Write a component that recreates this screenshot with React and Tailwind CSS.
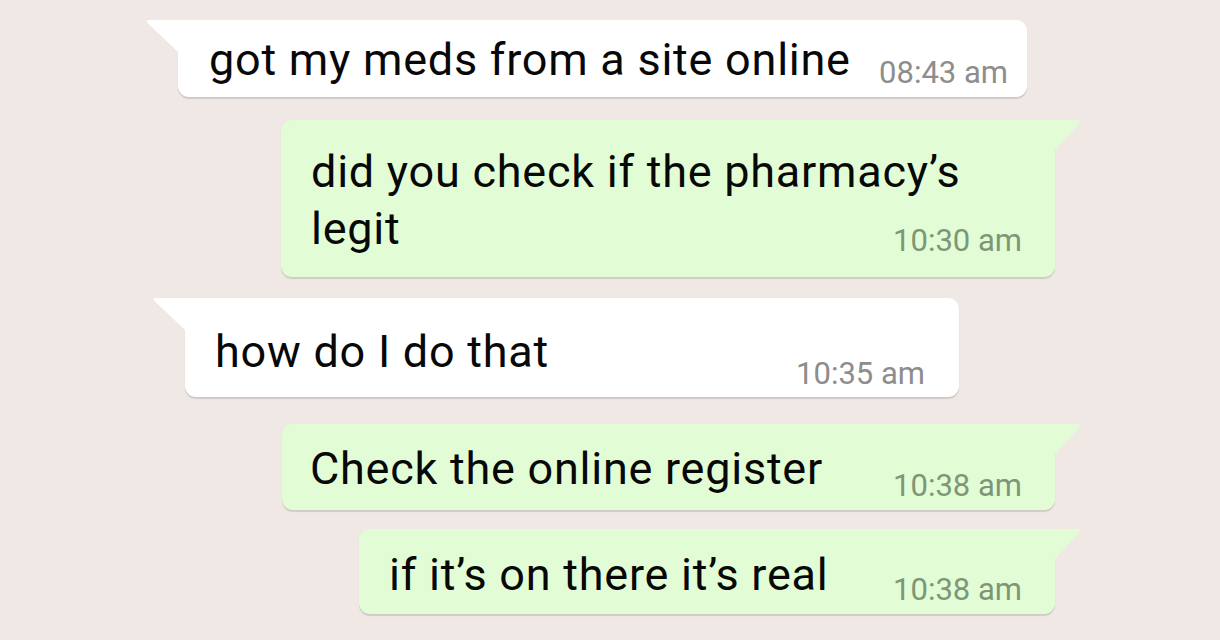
const messages = [
  {
    id: 1,
    out: false,
    text: "got my meds from a site online",
    time: "08:43 am",
    box: "mt-[20px] ml-[178px] w-[849px] pt-[11px] pb-[8.5px] pl-[31px] pr-[19px]",
    timeClass: "mt-[27px]",
  },
  {
    id: 2,
    out: true,
    lead: "did you check if the pharmacy’s",
    text: "legit",
    time: "10:30 am",
    box: "mt-[23px] ml-[281px] w-[774px] pt-[23px] pb-[20px] pl-[30px] pr-[33px]",
    timeClass: "mt-[26px]",
  },
  {
    id: 3,
    out: false,
    text: "how do I do that",
    time: "10:35 am",
    box: "mt-[21px] ml-[185px] w-[774px] pt-[25px] pb-[8.5px] pl-[30px] pr-[34px]",
    timeClass: "mt-[36px]",
  },
  {
    id: 4,
    out: true,
    text: "Check the online register",
    time: "10:38 am",
    box: "mt-[27px] ml-[282px] w-[773px] pt-[16px] pb-[8.5px] pl-[28px] pr-[33px]",
    timeClass: "mt-[31px]",
  },
  {
    id: 5,
    out: true,
    text: "if it’s on there it’s real",
    time: "10:38 am",
    box: "mt-[19px] ml-[359px] w-[696px] pt-[17px] pb-[9.5px] pl-[30px] pr-[33px]",
    timeClass: "mt-[29px]",
  },
];

const lineText = "text-[45px] leading-[57px] tracking-[0.75px] text-[#080808]";

const Tail = ({ out }) =>
  out ? (
    <svg
      className="absolute top-0 right-[-27px]"
      width="28"
      height="32"
      viewBox="0 0 28 32"
    >
      <path d="M0 0 H24 Q28 0 25.5 3 L0 31 Z" fill="#e2fdd6" />
    </svg>
  ) : (
    <svg
      className="absolute top-0 left-[-33px]"
      width="34"
      height="34"
      viewBox="0 0 34 34"
    >
      <path d="M34 0 H4 Q0 0 2.5 3 L34 33 Z" fill="#ffffff" />
    </svg>
  );

const Bubble = ({ msg }) => (
  <div
    className={`relative rounded-[11px] shadow-[0_1.5px_1px_rgba(0,0,0,0.13)] ${
      msg.out ? "bg-[#e2fdd6] rounded-tr-none" : "bg-white rounded-tl-none"
    } ${msg.box}`}
  >
    <Tail out={msg.out} />
    {msg.lead && <p className={lineText}>{msg.lead}</p>}
    <div className="flex items-start justify-between">
      <p className={lineText}>{msg.text}</p>
      <span
        className={`text-[31px] leading-[30px] whitespace-nowrap ${
          msg.out ? "text-[#7e9676]" : "text-[#8d8d8d]"
        } ${msg.timeClass}`}
      >
        {msg.time}
      </span>
    </div>
  </div>
);

export default function App() {
  return (
    <div
      className="w-[1220px] h-[640px] overflow-hidden bg-[#f0e8e5] flex flex-col"
      style={{ fontFamily: "Roboto, 'Noto Sans', Arial, sans-serif" }}
    >
      {messages.map((m) => (
        <Bubble key={m.id} msg={m} />
      ))}
    </div>
  );
}
